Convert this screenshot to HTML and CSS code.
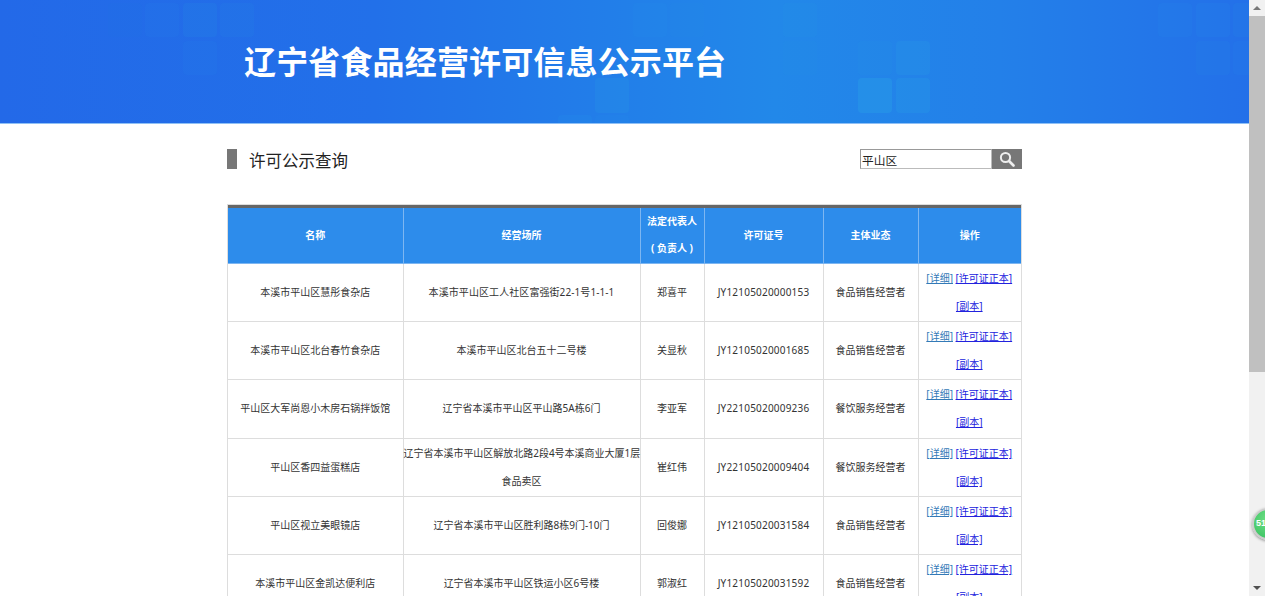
FILE: index.html
```html
<!DOCTYPE html>
<html lang="zh-CN">
<head>
    <meta charset="UTF-8">
    <title>辽宁省食品经营许可信息公示平台</title>
    <link rel="stylesheet" href="styles.css">
</head>
<body>
    <div class="page">
        <header class="banner">
            <svg class="tiles" width="1249" height="123" viewBox="0 0 1249 123">
                <g fill="#2aa8e8">
                    <rect x="33" y="3" width="34" height="34" rx="4" opacity=".02"/>
                    <rect x="108" y="3" width="34" height="34" rx="4" opacity=".03"/>
                    <rect x="145" y="3" width="34" height="34" rx="4" opacity=".05"/>
                    <rect x="183" y="3" width="34" height="34" rx="4" opacity=".12"/>
                    <rect x="220" y="3" width="34" height="34" rx="4" opacity=".08"/>
                    <rect x="183" y="41" width="34" height="34" rx="4" opacity=".05"/>
                    <rect x="595" y="78" width="34" height="35" rx="4" opacity=".16"/>
                    <rect x="558" y="115" width="34" height="34" rx="4" opacity=".1"/>
                    <rect x="595" y="115" width="34" height="34" rx="4" opacity=".06"/>
                    <rect x="633" y="3" width="34" height="34" rx="4" opacity=".06"/>
                    <rect x="670" y="3" width="34" height="34" rx="4" opacity=".04"/>
                    <rect x="783" y="3" width="34" height="34" rx="4" opacity=".08"/>
                    <rect x="783" y="41" width="34" height="34" rx="4" opacity=".04"/>
                    <rect x="858" y="41" width="34" height="34" rx="4" opacity=".08"/>
                    <rect x="896" y="41" width="34" height="34" rx="4" opacity=".16"/>
                    <rect x="858" y="78" width="34" height="35" rx="4" opacity=".3"/>
                    <rect x="896" y="78" width="34" height="35" rx="4" opacity=".2"/>
                    <rect x="1158" y="3" width="34" height="34" rx="4" opacity=".05"/>
                    <rect x="1196" y="3" width="34" height="34" rx="4" opacity=".09"/>
                    <rect x="1233" y="3" width="34" height="34" rx="4" opacity=".08"/>
                    <rect x="1196" y="41" width="34" height="34" rx="4" opacity=".07"/>
                    <rect x="1233" y="41" width="34" height="34" rx="4" opacity=".05"/>
                </g>
            </svg>
            <h1 class="banner-title">辽宁省食品经营许可信息公示平台</h1>
        </header>

        <main class="container">
            <div class="query-bar">
                <h2 class="query-heading">许可公示查询</h2>
                <form class="search-box">
                    <input class="search-input" type="text" value="平山区">
                    <button class="search-button" type="button" aria-label="搜索">
                        <svg width="16" height="16" viewBox="0 0 16 16" fill="none" stroke="#eee">
                            <circle cx="6.5" cy="6.5" r="4.6" stroke-width="2"/>
                            <path d="M10 10l4.5 4.5" stroke-width="2.6" stroke-linecap="round"/>
                        </svg>
                    </button>
                </form>
            </div>

            <div class="table-frame">
                <table class="license-table">
                    <colgroup>
                        <col class="col-name">
                        <col class="col-place">
                        <col class="col-person">
                        <col class="col-number">
                        <col class="col-type">
                        <col class="col-action">
                    </colgroup>
                    <thead>
                        <tr>
                            <th>名称</th>
                            <th>经营场所</th>
                            <th>法定代表人<br>( 负责人 )</th>
                            <th>许可证号</th>
                            <th>主体业态</th>
                            <th>操作</th>
                        </tr>
                    </thead>
                    <tbody>
                        <tr>
                            <td>本溪市平山区慧彤食杂店</td>
                            <td class="latin-wide">本溪市平山区工人社区富强街22-1号1-1-1</td>
                            <td>郑喜平</td>
                            <td class="license-no">JY12105020000153</td>
                            <td>食品销售经营者</td>
                            <td><a class="link-detail" href="#">[详细]</a> <a href="#">[许可证正本]</a><br><a href="#">[副本]</a></td>
                        </tr>
                        <tr>
                            <td>本溪市平山区北台春竹食杂店</td>
                            <td>本溪市平山区北台五十二号楼</td>
                            <td>关显秋</td>
                            <td class="license-no">JY12105020001685</td>
                            <td>食品销售经营者</td>
                            <td><a class="link-detail" href="#">[详细]</a> <a href="#">[许可证正本]</a><br><a href="#">[副本]</a></td>
                        </tr>
                        <tr>
                            <td>平山区大军尚恩小木房石锅拌饭馆</td>
                            <td>辽宁省本溪市平山区平山路5A栋6门</td>
                            <td>李亚军</td>
                            <td class="license-no">JY22105020009236</td>
                            <td>餐饮服务经营者</td>
                            <td><a class="link-detail" href="#">[详细]</a> <a href="#">[许可证正本]</a><br><a href="#">[副本]</a></td>
                        </tr>
                        <tr>
                            <td>平山区香四益蛋糕店</td>
                            <td class="no-wrap">辽宁省本溪市平山区解放北路2段4号本溪商业大厦1层<br>食品卖区</td>
                            <td>崔红伟</td>
                            <td class="license-no">JY22105020009404</td>
                            <td>餐饮服务经营者</td>
                            <td><a class="link-detail" href="#">[详细]</a> <a href="#">[许可证正本]</a><br><a href="#">[副本]</a></td>
                        </tr>
                        <tr>
                            <td>平山区视立美眼镜店</td>
                            <td>辽宁省本溪市平山区胜利路8栋9门-10门</td>
                            <td>回俊娜</td>
                            <td class="license-no">JY12105020031584</td>
                            <td>食品销售经营者</td>
                            <td><a class="link-detail" href="#">[详细]</a> <a href="#">[许可证正本]</a><br><a href="#">[副本]</a></td>
                        </tr>
                        <tr>
                            <td>本溪市平山区金凯达便利店</td>
                            <td>辽宁省本溪市平山区铁运小区6号楼</td>
                            <td>郭淑红</td>
                            <td class="license-no">JY12105020031592</td>
                            <td>食品销售经营者</td>
                            <td><a class="link-detail" href="#">[详细]</a> <a href="#">[许可证正本]</a><br><a href="#">[副本]</a></td>
                        </tr>
                    </tbody>
                </table>
            </div>
        </main>
    </div>

    <div class="scrollbar">
        <span class="arrow-up"></span>
        <div class="scroll-track"><div class="scroll-thumb"></div></div>
        <span class="arrow-down"></span>
    </div>

    <a class="float-badge" href="#">51</a>
</body>
</html>
```

FILE: styles.css
```css
html, body {
    height: 100%;
}
body {
    margin: 0;
    display: flex;
    height: 596px;
    overflow: hidden;
    background-color: #fff;
    color: #333;
    font-family: "Noto Sans", "Noto Sans CJK SC", sans-serif;
    font-size: 10px;
}
.page {
    width: 1249px;
    height: 596px;
    overflow: hidden;
}
.banner {
    position: relative;
    display: flex;
    align-items: center;
    box-sizing: border-box;
    height: 124px;
    padding: 0 0 4px 244px;
    background: linear-gradient(90deg, #2369e8 0%, #2270e9 30%, #2288e9 62%, #2380e9 80%, #2370e9 100%);
    border-bottom: 1px solid #8fc0f5;
    overflow: hidden;
}
.tiles {
    position: absolute;
    left: 0;
    top: 0;
}
.banner-title {
    position: relative;
    margin: 0;
    color: #fff;
    font-family: "Noto Sans CJK SC", sans-serif;
    font-size: 32px;
    font-weight: 700;
    line-height: 1;
    letter-spacing: .15px;
}
.container {
    width: 795px;
    margin-left: 227px;
}
.query-bar {
    display: flex;
    justify-content: space-between;
    align-items: flex-start;
    padding-top: 25px;
    height: 55px;
}
.query-heading {
    margin: 0;
    height: 20px;
    padding-left: 12px;
    border-left: 10px solid #777;
    color: #222;
    font-family: "Noto Sans CJK SC", sans-serif;
    font-size: 16.5px;
    font-weight: 400;
    line-height: 22px;
}
.search-box {
    display: flex;
    height: 20px;
    margin: 0;
}
.search-input {
    box-sizing: border-box;
    width: 132px;
    height: 20px;
    padding: 0 1px;
    border: 1px solid #bbb;
    border-top-color: #999;
    border-left-color: #999;
    color: #222;
    font-family: "Noto Sans CJK SC", sans-serif;
    font-size: 11.7px;
    outline: none;
}
.search-button {
    display: flex;
    align-items: center;
    justify-content: center;
    width: 30px;
    height: 20px;
    padding: 0;
    border: none;
    background-color: #777;
}
.table-frame {
    box-sizing: border-box;
    width: 795px;
    border: 1px solid #ddd;
    border-bottom: none;
}
.license-table {
    width: 793px;
    table-layout: fixed;
    border-collapse: collapse;
    text-align: center;
}
.col-name { width: 175px; }
.col-place { width: 237px; }
.col-person { width: 64px; }
.col-number { width: 119px; }
.col-type { width: 95px; }
.col-action { width: 103px; }
.license-table th {
    height: 54px;
    padding: 0 0 1px;
    border: 1px solid #7db6f1;
    border-top: 3px solid #666;
    border-left: none;
    background-color: #2d8ceb;
    color: #fff;
    font-weight: 700;
    line-height: 27px;
}
.license-table th:last-child {
    border-right: none;
}
.license-table td {
    height: 56.2px;
    padding: 0 0 1px;
    border: 1px solid #ddd;
    border-left: none;
    color: #333;
    line-height: 28px;
}
.license-table td:last-child {
    padding-right: 1px;
    border-right: none;
}
.license-table .license-no {
    letter-spacing: .2px;
}
.license-table .latin-wide {
    letter-spacing: .08px;
}
.license-table .no-wrap {
    white-space: nowrap;
    letter-spacing: -.02px;
}
.license-table a {
    color: #2222dd;
}
.license-table a.link-detail {
    color: #337ab7;
}
.scrollbar {
    display: flex;
    flex-direction: column;
    align-items: center;
    width: 16px;
    height: 596px;
    background-color: #f1f1f1;
}
.arrow-up, .arrow-down {
    width: 0;
    height: 0;
    margin: 6px 0;
    border-left: 4px solid transparent;
    border-right: 4px solid transparent;
}
.arrow-up {
    border-bottom: 4px solid #777;
}
.arrow-down {
    border-top: 4px solid #505050;
}
.scroll-track {
    flex: 1;
    width: 100%;
}
.scroll-thumb {
    height: 356px;
    background-color: #c0c0c0;
}
.float-badge {
    position: absolute;
    left: 1252px;
    top: 508px;
    box-sizing: border-box;
    width: 32px;
    height: 32px;
    padding-left: 2px;
    border: 2px solid #ccc;
    border-radius: 50%;
    background: radial-gradient(circle at 50% 35%, #6fdf85, #36c060);
    box-shadow: 0 1px 3px rgba(0, 0, 0, .4);
    color: #fff;
    font-family: "Liberation Sans", sans-serif;
    font-size: 9px;
    font-weight: 700;
    line-height: 27px;
    text-decoration: none;
}
```
